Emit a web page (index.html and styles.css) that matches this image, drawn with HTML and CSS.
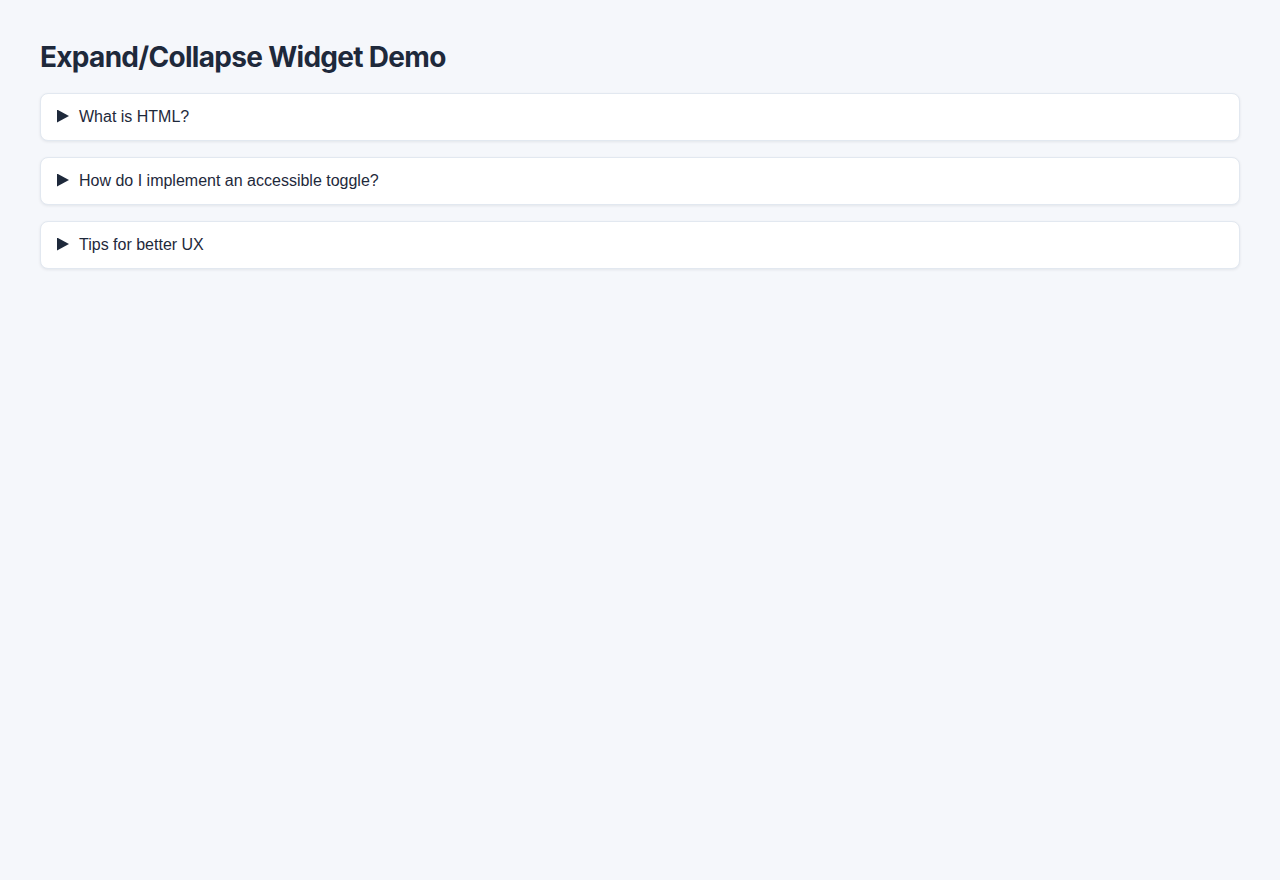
FILE: index.html
```html
<!DOCTYPE html>
<html lang="en">
<head>
<meta charset="utf-8">
<title>Expand/Collapse Widget Demo</title>
<link rel="stylesheet" href="styles.css">
</head>
<body>
<main class="page">
  <h1 class="title">Expand/Collapse Widget Demo</h1>
  <div class="list">
    <details class="item"><summary class="summary"><span class="arrow"></span><span class="label">What is HTML?</span></summary><div class="content">HTML is the standard markup language for web pages.</div></details>
    <details class="item"><summary class="summary"><span class="arrow"></span><span class="label">How do I implement an accessible toggle?</span></summary><div class="content">Use a button with aria-expanded.</div></details>
    <details class="item"><summary class="summary"><span class="arrow"></span><span class="label">Tips for better UX</span></summary><div class="content">Keep it simple.</div></details>
  </div>
</main>
</body>
</html>
```

FILE: styles.css
```css
html, body {
  margin: 0;
  padding: 0;
  background: #f5f7fb;
  color: #1e293b;
  font-family: "Liberation Sans", Arial, sans-serif;
}
.page {
  padding: 41px 40px 40px;
}
.title {
  margin: 0 0 18px;
  font-family: Inter, "Liberation Sans", sans-serif;
  font-size: 28px;
  font-weight: 700;
  line-height: 1.2;
  letter-spacing: -0.025em;
  color: #1e293b;
}
.list {
  display: flex;
  flex-direction: column;
  gap: 16px;
}
.item {
  background: #ffffff;
  border: 1px solid #e2e8f0;
  border-radius: 8px;
  box-shadow: 0 1px 3px rgba(15, 23, 42, 0.08);
}
.summary {
  display: flex;
  align-items: center;
  gap: 10px;
  list-style: none;
  padding: 11px 16px;
  font-size: 16px;
  line-height: 24px;
  cursor: pointer;
  color: #1e293b;
}
.summary::-webkit-details-marker {
  display: none;
}
.arrow {
  width: 12px;
  height: 13px;
  flex: none;
  background: #1e293b;
  clip-path: polygon(0 0, 100% 50%, 0 100%);
  margin-top: -1px;
}
.content {
  padding: 0 16px 12px;
}
```
